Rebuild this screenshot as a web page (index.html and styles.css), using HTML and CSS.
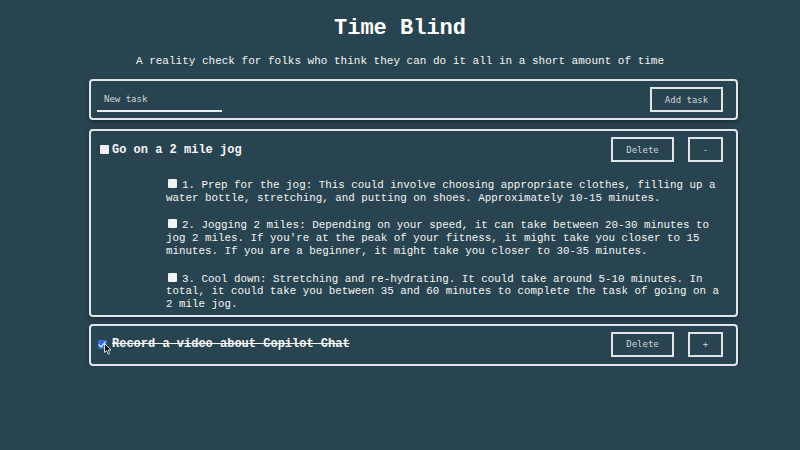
FILE: index.html
```html
<!DOCTYPE html>
<html lang="en">
<head>
<meta charset="utf-8">
<title>Time Blind</title>
<link rel="stylesheet" href="styles.css">
</head>
<body>
<header class="intro">
  <h1 class="title">Time Blind</h1>
  <p class="tagline">A reality check for folks who think they can do it all in a short amount of time</p>
</header>
<main class="board">
  <form class="card new-task">
    <input class="task-input" type="text" placeholder="New task">
    <button class="btn btn-add" type="button">Add task</button>
  </form>

  <section class="card task">
    <div class="task-head">
      <label class="task-label"><input class="check" type="checkbox"><span>Go on a 2 mile jog</span></label>
      <div class="actions">
        <button class="btn btn-delete" type="button">Delete</button>
        <button class="btn btn-toggle" type="button">-</button>
      </div>
    </div>
    <ul class="steps">
      <li class="step"><input class="check check-sm" type="checkbox">1. Prep for the jog: This could involve choosing appropriate clothes, filling up a water bottle, stretching, and putting on shoes. Approximately 10-15 minutes.</li>
      <li class="step"><input class="check check-sm" type="checkbox">2. Jogging 2 miles: Depending on your speed, it can take between 20-30 minutes to jog 2 miles. If you're at the peak of your fitness, it might take you closer to 15 minutes. If you are a beginner, it might take you closer to 30-35 minutes.</li>
      <li class="step"><input class="check check-sm" type="checkbox">3. Cool down: Stretching and re-hydrating. It could take around 5-10 minutes. In total, it could take you between 35 and 60 minutes to complete the task of going on a 2 mile jog.</li>
    </ul>
  </section>

  <section class="card task task-collapsed">
    <div class="task-head">
      <label class="task-label done"><input class="check" type="checkbox" checked><span>Record a video about Copilot Chat</span>
        <svg class="cursor" width="8" height="12" viewBox="0 0 8 12"><path d="M0.5 0.5 L0.5 9.5 L2.6 7.6 L4.2 11.2 L5.6 10.6 L4.1 7.1 L7 7 Z" fill="#111" stroke="#fff" stroke-width="0.8"/></svg>
      </label>
      <div class="actions">
        <button class="btn btn-delete" type="button">Delete</button>
        <button class="btn btn-toggle" type="button">+</button>
      </div>
    </div>
  </section>
</main>
</body>
</html>
```
FILE: styles.css
```css
* { box-sizing: border-box; }

body {
  margin: 0;
  background: #284450;
  color: #f4f4f4;
  font-family: "Courier New", "Nimbus Mono PS", "FreeMono", "Liberation Mono", monospace;
}

.intro {
  text-align: center;
}

.title {
  margin: 16px 0 0;
  font-size: 22px;
  line-height: 25px;
  font-weight: bold;
  color: #ffffff;
}

.tagline {
  margin: 14px 0 0;
  font-size: 11px;
  line-height: 13px;
}

.board {
  width: 649px;
  margin: 11px 0 0 89px;
  display: flex;
  flex-direction: column;
  gap: 7px;
}

.card {
  border: 2px solid #dfe5e8;
  border-radius: 4px;
  box-shadow: 0 2px 4px rgba(0, 0, 0, 0.35);
}

.new-task {
  margin: 0 0 2px;
  display: flex;
  align-items: center;
  justify-content: space-between;
  padding: 6px 13px 6px 6px;
}

.task-input {
  width: 125px;
  height: 23px;
  margin-top: 2px;
  padding: 0 0 1px 7px;
  background: transparent;
  border: none;
  border-bottom: 2px solid #e8eef0;
  color: #eee;
  font-family: "DejaVu Sans Mono", monospace;
  font-size: 9px;
  outline: none;
}

.task-input::placeholder {
  color: #d0d6d9;
}

.btn {
  height: 25px;
  background: transparent;
  border: 2px solid #dfe5e8;
  border-radius: 0;
  color: #cfd6d9;
  font-family: "DejaVu Sans Mono", monospace;
  font-size: 9px;
  padding: 0;
}

.btn-add { width: 73px; }
.btn-delete { width: 63px; }
.btn-toggle { width: 35px; }

.task {
  padding: 6px 13px 4px 9px;
}

.task-collapsed {
  padding-bottom: 7px;
}

.task-head {
  display: flex;
  align-items: center;
  justify-content: space-between;
}

.task-label {
  position: relative;
  display: flex;
  align-items: center;
  font-size: 12px;
  font-weight: bold;
  color: #f6f6f6;
}

.actions {
  display: flex;
  gap: 14px;
}

.check {
  appearance: none;
  -webkit-appearance: none;
  width: 9px;
  height: 9px;
  margin: 0 3px 0 0;
  background: #f2f2f2;
  border-radius: 1px;
  position: relative;
  flex: none;
}

.check:checked {
  background: #2f6fd6;
  margin-left: -2px;
  margin-right: 5px;
}

.check:checked::after {
  content: "";
  position: absolute;
  left: 2px;
  top: 0px;
  width: 3px;
  height: 6px;
  border: solid #fff;
  border-width: 0 1.5px 1.5px 0;
  transform: rotate(40deg);
}

.done span {
  text-decoration: line-through;
  text-decoration-thickness: 1px;
}

.cursor {
  position: absolute;
  left: 4px;
  top: 6px;
}

.steps {
  list-style: none;
  margin: 17px 0 0;
  padding: 0 0 0 66px;
  display: flex;
  flex-direction: column;
  gap: 15px;
}

.step {
  font-size: 10.85px;
  line-height: 12.7px;
  font-weight: normal;
}

.check-sm {
  margin: 0 5px 0 2px;
  vertical-align: 0;
}
```
